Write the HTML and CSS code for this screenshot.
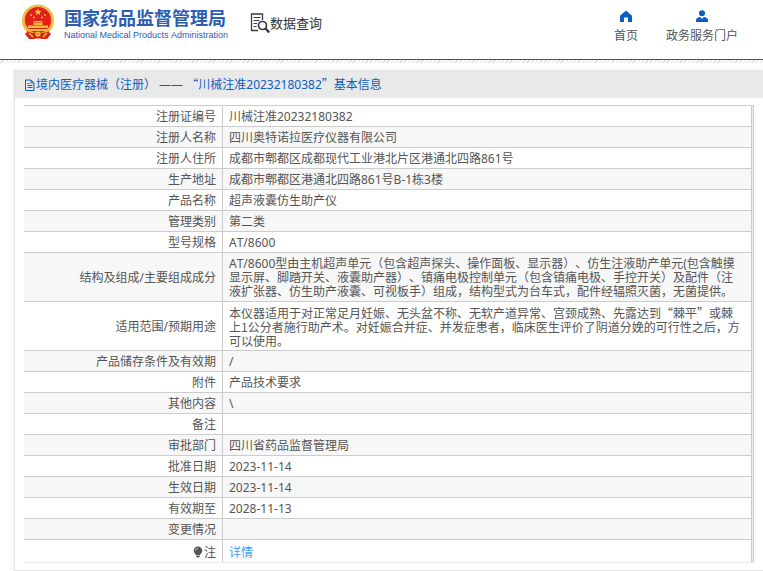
FILE: index.html
```html
<!DOCTYPE html>
<html lang="zh-CN">
<head>
    <meta charset="UTF-8">
    <meta name="viewport" content="width=device-width, initial-scale=1.0">
    <title>国家药品监督管理局 数据查询</title>
    <link rel="stylesheet" href="styles.css">
</head>
<body>
    <header class="header">
        <div class="brand">
            <svg class="emblem" viewBox="0 0 34 36" aria-hidden="true">
                <path d="M8 26h18l4 4-4 5h-5l-4-2-4 2H8l-4-5z" fill="#d8231c"/>
                <circle cx="17" cy="16.500" r="16" fill="#e9b13a"/>
                <circle cx="17" cy="16.500" r="14.800" fill="none" stroke="#f6d66c" stroke-width="1" stroke-dasharray="2 1"/>
                <circle cx="17" cy="16" r="13" fill="#e3211b"/>
                <path d="M17 4.500l1 2.200 2.400.2-1.800 1.600.6 2.400-2.200-1.300-2.200 1.300.6-2.400-1.800-1.600 2.400-.2z" fill="#f9cf45"/>
                <g fill="#f5bd3b">
                    <circle cx="10" cy="11" r="1"/>
                    <circle cx="13" cy="13.500" r="1"/>
                    <circle cx="21" cy="13.500" r="1"/>
                    <circle cx="24" cy="11" r="1"/>
                    <path d="M13 17h8l1 1.500H12zM12.500 19h9v2h-9zM7 21.500h20v2.500H7zM6 25h22l-2 2H8z"/>
                </g>
                <path d="M6 27c5 3 17 3 22 0l-2 6c-4 2-14 2-18 0z" fill="#d8231c"/>
                <circle cx="17" cy="30" r="2.600" fill="#f2bd3c"/>
                <circle cx="17" cy="30" r="1.200" fill="#e08a24"/>
                <path d="M8 29l4 4M26 29l-4 4" stroke="#f2bd3c" stroke-width="1.500"/>
            </svg>
            <div class="brand-text">
                <div class="brand-cn">国家药品监督管理局</div>
                <div class="brand-en">National Medical Products Administration</div>
            </div>
        </div>

        <div class="query">
            <svg class="query-icon" viewBox="0 0 20 20" fill="none" stroke="#3b3b4b" aria-hidden="true">
                <path d="M8 17.500H1.500V1H12.500v6" stroke-width="1.300"/>
                <path d="M3.500 4.500h7M3.500 7.500h6M3.500 10.500h3.500M3.500 13.500h3" stroke-width="1.100"/>
                <circle cx="12.500" cy="12.500" r="4" stroke-width="1.700"/>
                <path d="M15.500 15.500l3.800 4" stroke-width="2.400"/>
            </svg>
            <span>数据查询</span>
        </div>

        <nav class="nav">
            <a class="nav-link" href="#">
                <svg class="nav-icon" viewBox="0 0 12 12" aria-hidden="true">
                    <path d="M6 0.500L0 5.700V12h4V7.500h4V12h4V5.700z" fill="#0a5fc0"/>
                </svg>
                首页
            </a>
            <a class="nav-link" href="#">
                <svg class="nav-icon" viewBox="0 0 12 12" aria-hidden="true">
                    <circle cx="6" cy="3.200" r="3" fill="#0a5fc0"/>
                    <path d="M0 12V9.800Q.2 8 2.800 7.300L4.200 7 6 9l1.800-2 1.400.3Q11.800 8 12 9.800V12z" fill="#0a5fc0"/>
                </svg>
                政务服务门户
            </a>
        </nav>
    </header>
    <div class="stripe"></div>

    <main class="panel">
        <h1 class="panel-title">
            <svg class="doc-icon" viewBox="0 0 12 12" fill="none" stroke="#0a5fc0" aria-hidden="true">
                <path d="M1.500 1h5.500l3 3v7.500H1.500zM7 1v3h3M3.500 4.500h2M3.500 6.500h5M3.500 8.500h5"/>
            </svg>
            <span>境内医疗器械（注册） —— <span class="cn">“</span>川械注准20232180382<span class="cn">”</span>基本信息</span>
        </h1>

        <div class="panel-body">
            <table class="info">
                <tbody>
                    <tr><th scope="row">注册证编号</th><td>川械注准20232180382</td></tr>
                    <tr><th scope="row">注册人名称</th><td>四川奥特诺拉医疗仪器有限公司</td></tr>
                    <tr><th scope="row">注册人住所</th><td>成都市郫都区成都现代工业港北片区港通北四路861号</td></tr>
                    <tr><th scope="row">生产地址</th><td>成都市郫都区港通北四路861号B-1栋3楼</td></tr>
                    <tr><th scope="row">产品名称</th><td>超声液囊仿生助产仪</td></tr>
                    <tr><th scope="row">管理类别</th><td>第二类</td></tr>
                    <tr><th scope="row">型号规格</th><td>AT/8600</td></tr>
                    <tr><th scope="row">结构及组成/主要组成成分</th><td>AT/8600型由主机超声单元（包含超声探头、操作面板、显示器）、仿生注液助产单元(包含触摸显示屏、脚踏开关、液囊助产器）、镇痛电极控制单元（包含镇痛电极、手控开关）及配件（注液扩张器、仿生助产液囊、可视板手）组成，结构型式为台车式，配件经辐照灭菌，无菌提供。</td></tr>
                    <tr><th scope="row">适用范围/预期用途</th><td class="cn">本仪器适用于对正常足月妊娠、无头盆不称、无软产道异常、宫颈成熟、先露达到“棘平”或棘上1公分者施行助产术。对妊娠合并症、并发症患者，临床医生评价了阴道分娩的可行性之后，方可以使用。</td></tr>
                    <tr><th scope="row">产品储存条件及有效期</th><td>/</td></tr>
                    <tr><th scope="row">附件</th><td>产品技术要求</td></tr>
                    <tr><th scope="row">其他内容</th><td>\</td></tr>
                    <tr><th scope="row">备注</th><td></td></tr>
                    <tr><th scope="row">审批部门</th><td>四川省药品监督管理局</td></tr>
                    <tr><th scope="row">批准日期</th><td>2023-11-14</td></tr>
                    <tr><th scope="row">生效日期</th><td>2023-11-14</td></tr>
                    <tr><th scope="row">有效期至</th><td>2028-11-13</td></tr>
                    <tr><th scope="row">变更情况</th><td></td></tr>
                    <tr class="note">
                        <th scope="row"><svg class="bulb" viewBox="0 0 10 12" aria-hidden="true"><path d="M5 0.500a4.300 4.300 0 0 1 4.300 4.300C9.300 7 7.500 7.600 7 9H3C2.500 7.600.7 7 .7 4.800A4.300 4.300 0 0 1 5 .5zM3.200 9.500h3.600v1L6 11.500H4l-.8-1z" fill="#555"/><path d="M2.500 4.500Q2.800 2.500 5 2.300" fill="none" stroke="#ddd" stroke-width=".8"/></svg>注</th>
                        <td><a class="detail" href="#">详情</a></td>
                    </tr>
                </tbody>
            </table>
        </div>
    </main>
</body>
</html>
```

FILE: styles.css
```css
* {
    margin: 0;
    padding: 0;
    box-sizing: border-box;
}

body {
    font-family: "Noto Sans", "Noto Sans CJK SC", sans-serif;
    font-size: 12px;
    line-height: 14px;
    font-kerning: none;
    font-feature-settings: "chws" 0, "halt" 0;
    text-spacing-trim: space-all;
    color: #555;
    background: #fff;
}

a {
    color: inherit;
    text-decoration: none;
}

.cn {
    font-family: "Noto Sans CJK SC", sans-serif;
}

/* header */
.header {
    display: flex;
    align-items: flex-start;
    height: 60px;
    padding: 4px 25px 0 21px;
    border-bottom: 1px solid #0a5fc0;
}

.brand {
    display: flex;
    gap: 9px;
}

.emblem {
    width: 34px;
    height: 36px;
}

.brand-text {
    padding-top: 4px;
    color: #2d5db0;
    white-space: nowrap;
}

.brand-cn {
    font-size: 18px;
    font-weight: bold;
    line-height: 20px;
}

.brand-en {
    font-family: "Liberation Sans", Arial, sans-serif;
    font-size: 9px;
    line-height: 14px;
}

.query {
    display: flex;
    align-items: center;
    margin-left: 22px;
    padding-top: 9px;
    font-size: 13px;
    color: #333;
    white-space: nowrap;
}

.query-icon {
    width: 20px;
    height: 20px;
}

.nav {
    display: flex;
    gap: 28px;
    margin-left: auto;
    padding-top: 6px;
}

.nav-link {
    display: flex;
    flex-direction: column;
    align-items: center;
    gap: 7px;
    white-space: nowrap;
}

.nav-icon {
    width: 12px;
    height: 12px;
}

.stripe {
    height: 3px;
    background: repeating-linear-gradient(135deg, #fff 0, #fff 2px, #ddd 2px, #ddd 3px);
}

/* detail panel */
.panel {
    margin: 7px 0 0 14px;
    border-left: 1px solid #e4e4e4;
    border-bottom: 1px solid #e4e4e4;
    box-shadow: 0 0 4px rgba(0, 0, 0, 0.08);
}

.panel-title {
    display: flex;
    align-items: center;
    height: 28px;
    padding: 2px 0 0 9px;
    font-size: 12px;
    font-weight: normal;
    color: #0a5fc0;
    background: #e9e9e9;
    border-bottom: 1px solid #ececf4;
}

.doc-icon {
    width: 12px;
    height: 12px;
}

.panel-body {
    padding: 7px 9px 7px;
}

.info {
    width: 100%;
    border-collapse: separate;
    border-spacing: 0;
    border-top: 1px solid #ccc;
    border-right: 1px solid #ccc;
    border-bottom: 1px solid #ebebf5;
    padding-right: 1px;
    background: #ebebf5;
}

.info th,
.info td {
    padding: 4px 6px 2px;
    background: #fff;
    border-right: 1px solid #ccc;
    border-bottom: 1px solid #ccc;
    vertical-align: middle;
}

.info th {
    width: 199px;
    font-weight: normal;
    text-align: right;
}

.info td {
    height: 21px;
    padding-right: 10px;
}

.info tr:nth-child(even) th,
.info tr:nth-child(even) td {
    background: #f7f7f7;
}

.info .note th,
.info .note td {
    height: 22px;
    padding-top: 5px;
    border-bottom: 0;
}

.bulb {
    width: 10px;
    height: 12px;
    margin-right: 1px;
    vertical-align: -1px;
}

.detail {
    color: #409eff;
}
```
